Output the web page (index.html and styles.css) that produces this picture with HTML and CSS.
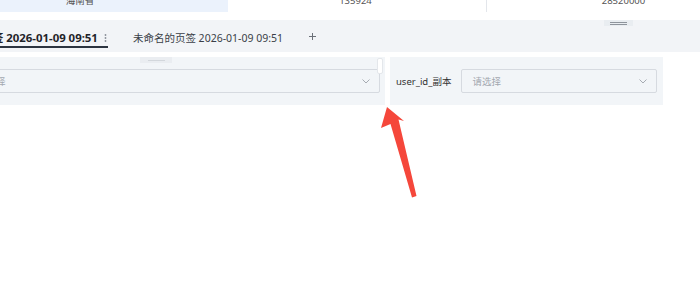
FILE: index.html
```html
<!DOCTYPE html>
<html lang="zh">
<head>
<meta charset="utf-8">
<link rel="stylesheet" href="styles.css">
</head>
<body>
<div class="page">
  <div class="table-row">
    <div class="cell cell-province">海南省</div>
    <div class="cell cell-a">135924</div>
    <div class="cell cell-b">28520000</div>
  </div>

  <div class="tabbar">
    <div class="tab tab-active">
      <span class="tab-title">页签 2026-01-09 09:51</span>
      <svg class="tab-more" width="3" height="8" viewBox="0 0 3 8"><circle cx="1.5" cy="1" r="0.9"/><circle cx="1.5" cy="4" r="0.9"/><circle cx="1.5" cy="7" r="0.9"/></svg>
    </div>
    <div class="tab">
      <span class="tab-title">未命名的页签 2026-01-09 09:51</span>
    </div>
    <svg class="tab-add" width="7" height="7" viewBox="0 0 7 7"><path d="M3.5 0 V7 M0 3.5 H7"/></svg>
    <div class="drag-handle drag-handle-bar"><span></span><span></span></div>
  </div>

  <div class="panels">
    <div class="panel panel-first">
      <div class="select select-first">
        <span class="placeholder">请选择</span>
        <svg class="chevron" width="8" height="5" viewBox="0 0 8 5"><path d="M0.5 0.5 L4 4 L7.5 0.5"/></svg>
      </div>
      <div class="panel-handle"><span></span></div>
      <div class="resize-grip"></div>
    </div>
    <div class="panel panel-second">
      <span class="label">user_id_副本</span>
      <div class="select select-second">
        <span class="placeholder">请选择</span>
        <svg class="chevron" width="8" height="5" viewBox="0 0 8 5"><path d="M0.5 0.5 L4 4 L7.5 0.5"/></svg>
      </div>
    </div>
  </div>

  <svg class="annotation" width="700" height="293" viewBox="0 0 700 293">
    <polygon points="387,107 404,121 398.5,119.5 416.5,196 412,197.5 390.5,124 381,128" fill="#f5473b"/>
  </svg>
</div>
</body>
</html>
```

FILE: styles.css
```css
* { box-sizing: border-box; }

html, body {
  margin: 0;
  padding: 0;
  background: #ffffff;
  overflow: hidden;
}

body {
  width: 700px;
  height: 293px;
  font-family: "Noto Sans", "Noto Sans CJK SC", sans-serif;
  color: #333;
}

.page {
  position: relative;
  width: 700px;
  height: 293px;
  overflow: hidden;
}

/* data table row (cut at top) */
.table-row {
  display: flex;
  height: 23px;
  margin-top: -11px;
  font-size: 9.5px;
  line-height: 23px;
  color: #555;
}

.cell {
  flex: none;
  text-align: center;
}

.cell-province {
  width: 228px;
  background: #ebf2fc;
  padding-right: 68px;
}

.cell-a {
  width: 259px;
  border-right: 1px solid #e3e6eb;
  padding-left: 0;
  padding-right: 3px;
}

.cell-b {
  width: 273px;
}

/* tabs */
.tabbar {
  position: relative;
  display: flex;
  align-items: flex-start;
  height: 32px;
  margin-top: 8px;
  background: #f2f4f7;
  font-size: 10.5px;
}

.tab {
  display: flex;
  align-items: center;
  flex: none;
  height: 28px;
  padding-top: 10px;
  line-height: 16px;
  border-bottom: 2px solid transparent;
  color: #3a3f47;
  white-space: nowrap;
}

.tab-active {
  margin-left: -19.5px;
  padding-right: 1px;
  border-bottom-color: #2c3440;
  font-weight: 700;
  color: #1f2329;
  font-size: 11.4px;
}

.tab-more {
  margin-left: 6px;
  fill: #8a9099;
}

.tab + .tab {
  margin-left: 25px;
}

.tab-add {
  flex: none;
  margin-left: 26px;
  margin-top: 13px;
  fill: none;
  stroke: #6b7078;
  stroke-width: 1;
}

.drag-handle {
  position: absolute;
  display: flex;
  flex-direction: column;
  align-items: center;
  justify-content: center;
  gap: 1px;
}

.drag-handle-bar {
  left: 604px;
  top: 0;
  width: 29px;
  height: 6px;
  background: #e9edf1;
}

.drag-handle-bar span {
  display: block;
  width: 17px;
  height: 1px;
  background: #8e949c;
}

/* filter panels */
.panels {
  display: flex;
  gap: 5px;
  margin-top: 5px;
}

.panel {
  position: relative;
  display: flex;
  align-items: center;
  flex: none;
  height: 48px;
  background: #f2f5f8;
}

.panel-first {
  width: 385px;
  padding-right: 5px;
}

.panel-second {
  width: 273px;
  padding: 0 6px;
  gap: 10px;
}

.label {
  font-size: 9.5px;
  color: #333;
  white-space: nowrap;
}

.select {
  display: flex;
  align-items: center;
  justify-content: space-between;
  height: 24px;
  border: 1px solid #d6dae0;
  border-radius: 2px;
  padding: 0 9px 0 10px;
  font-size: 9.5px;
  color: #a3a8b0;
}

.select-first {
  width: 414px;
  margin-left: -34px;
  flex: none;
}

.select-second {
  flex: 1;
}

.chevron {
  fill: none;
  stroke: #a6abb2;
  stroke-width: 1;
}

.panel-handle {
  position: absolute;
  left: 140px;
  top: 0;
  width: 32px;
  height: 6px;
  background: #eaedf1;
  display: flex;
  align-items: center;
  justify-content: center;
}

.panel-handle span {
  display: block;
  width: 17px;
  height: 1px;
  background: #d3d7dc;
}

.resize-grip {
  position: absolute;
  left: 377px;
  top: 1px;
  width: 6px;
  height: 16px;
  background: #ffffff;
  border: 1px solid #e4e7eb;
  border-radius: 2px;
}

.annotation {
  position: absolute;
  left: 0;
  top: 0;
  pointer-events: none;
}
```
